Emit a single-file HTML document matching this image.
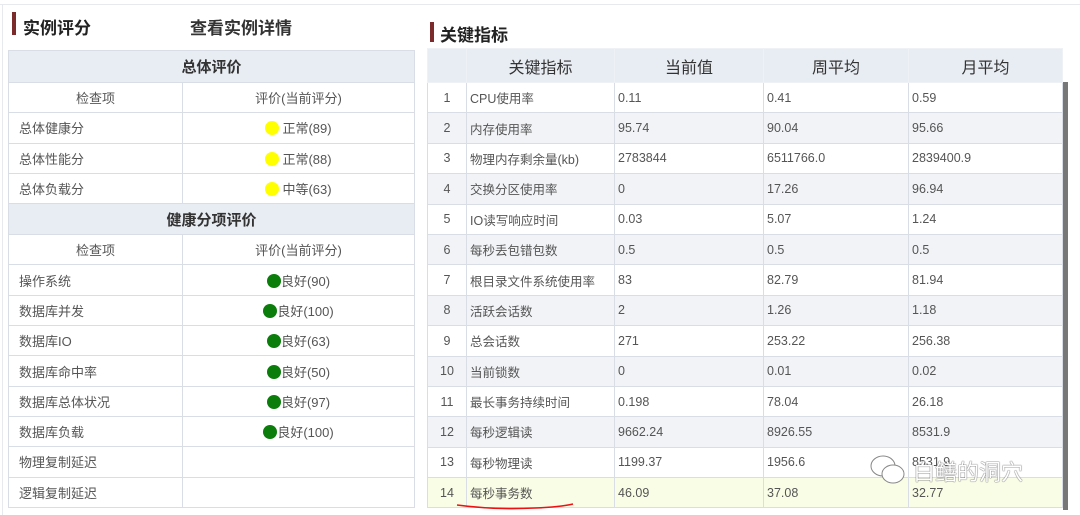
<!DOCTYPE html>
<html><head><meta charset="utf-8"><style>
*{margin:0;padding:0;box-sizing:border-box}
body{width:1080px;height:515px;background:#fff;font-family:"Liberation Sans","Noto Sans CJK SC",sans-serif;color:#333;position:relative;overflow:hidden}
.topline{position:absolute;left:0;top:4px;width:1080px;height:1px;background:#e6e9ee}
.lline{position:absolute;left:2px;top:4px;width:1px;height:511px;background:#e6e9ee}
.title{position:absolute;font-size:17px;font-weight:bold;color:#222}
.bar{position:absolute;width:4px;background:#7b2b2b}
table{border-collapse:collapse;position:absolute;table-layout:fixed}
td{border:1px solid #d9dde5;font-size:13px;color:#555;white-space:nowrap;overflow:hidden}
#L{left:8px;top:50px;width:407px}
#L td{height:30.3px;padding-left:10px}
#L .h{background:#e8edf3;text-align:center;font-weight:bold;font-size:15px;color:#333;padding:0}
#L .c{text-align:center;padding:0}
.dot{display:inline-block;width:14px;height:14px;border-radius:50%;vertical-align:-2px;margin-right:3px}
.y{background:#ffff00}.g{background:#0a7d0a;margin-right:0}
#R{left:427px;top:48px;width:636px}
#R td{height:30.4px;padding-left:3px;font-size:12.5px}
#R tr.hd td{background:#e8edf3;height:34px;text-align:center;font-size:16px;color:#333;padding:0;border-color:#eef1f5}
#R td.n{text-align:center;padding:0}
#R tr:nth-child(odd):not(.hd) td{background:#f1f3f6}
#R tr.hl td{background:#fafde6 !important}
.sb{position:absolute;left:1063px;top:82px;width:5px;height:428px;background:#777}
.wm{position:absolute;left:858px;top:455px;font-size:22px;color:#fff;text-shadow:0 0 1px #555,0 0 1px #555}
</style></head><body>
<div class="topline"></div><div class="lline"></div>
<div class="bar" style="left:12px;top:12px;height:23px"></div>
<div class="title" style="left:23px;top:14px">实例评分</div>
<div class="title" style="left:190px;top:14px;color:#333">查看实例详情</div>
<div class="bar" style="left:430px;top:22px;height:20px"></div>
<div class="title" style="left:440px;top:21px">关键指标</div>
<table id="L"><colgroup><col style="width:174px"><col></colgroup>
<tr><td class="h" colspan="2" style="height:32px">总体评价</td></tr>
<tr><td class="c">检查项</td><td class="c">评价(当前评分)</td></tr>
<tr><td>总体健康分</td><td class="c"><span class="dot y"></span>正常(89)</td></tr>
<tr><td>总体性能分</td><td class="c"><span class="dot y"></span>正常(88)</td></tr>
<tr><td>总体负载分</td><td class="c"><span class="dot y"></span>中等(63)</td></tr>
<tr><td class="h" colspan="2" style="height:31px">健康分项评价</td></tr>
<tr><td class="c">检查项</td><td class="c">评价(当前评分)</td></tr>
<tr><td>操作系统</td><td class="c"><span class="dot g"></span>良好(90)</td></tr>
<tr><td>数据库并发</td><td class="c"><span class="dot g"></span>良好(100)</td></tr>
<tr><td>数据库IO</td><td class="c"><span class="dot g"></span>良好(63)</td></tr>
<tr><td>数据库命中率</td><td class="c"><span class="dot g"></span>良好(50)</td></tr>
<tr><td>数据库总体状况</td><td class="c"><span class="dot g"></span>良好(97)</td></tr>
<tr><td>数据库负载</td><td class="c"><span class="dot g"></span>良好(100)</td></tr>
<tr><td>物理复制延迟</td><td></td></tr>
<tr><td>逻辑复制延迟</td><td></td></tr>
</table>
<table id="R"><colgroup><col style="width:39px"><col style="width:148px"><col style="width:149px"><col style="width:145px"><col></colgroup>
<tr class="hd"><td></td><td>关键指标</td><td>当前值</td><td>周平均</td><td>月平均</td></tr>
<tr><td class="n">1</td><td>CPU使用率</td><td>0.11</td><td>0.41</td><td>0.59</td></tr>
<tr><td class="n">2</td><td>内存使用率</td><td>95.74</td><td>90.04</td><td>95.66</td></tr>
<tr><td class="n">3</td><td>物理内存剩余量(kb)</td><td>2783844</td><td>6511766.0</td><td>2839400.9</td></tr>
<tr><td class="n">4</td><td>交换分区使用率</td><td>0</td><td>17.26</td><td>96.94</td></tr>
<tr><td class="n">5</td><td>IO读写响应时间</td><td>0.03</td><td>5.07</td><td>1.24</td></tr>
<tr><td class="n">6</td><td>每秒丢包错包数</td><td>0.5</td><td>0.5</td><td>0.5</td></tr>
<tr><td class="n">7</td><td>根目录文件系统使用率</td><td>83</td><td>82.79</td><td>81.94</td></tr>
<tr><td class="n">8</td><td>活跃会话数</td><td>2</td><td>1.26</td><td>1.18</td></tr>
<tr><td class="n">9</td><td>总会话数</td><td>271</td><td>253.22</td><td>256.38</td></tr>
<tr><td class="n">10</td><td>当前锁数</td><td>0</td><td>0.01</td><td>0.02</td></tr>
<tr><td class="n">11</td><td>最长事务持续时间</td><td>0.198</td><td>78.04</td><td>26.18</td></tr>
<tr><td class="n">12</td><td>每秒逻辑读</td><td>9662.24</td><td>8926.55</td><td>8531.9</td></tr>
<tr><td class="n">13</td><td>每秒物理读</td><td>1199.37</td><td>1956.6</td><td>8531.9</td></tr>
<tr class="hl"><td class="n">14</td><td>每秒事务数</td><td>46.09</td><td>37.08</td><td>32.77</td></tr>
</table>
<div class="sb"></div>
<svg style="position:absolute;left:455px;top:500px" width="125" height="12"><path d="M2 5 Q40 10 80 8 Q105 7 118 4" stroke="#e11" stroke-width="1.6" fill="none"/></svg>
<svg style="position:absolute;left:868px;top:452px" width="40" height="36"><ellipse cx="15" cy="14" rx="12" ry="10" fill="#fff" stroke="#888"/><ellipse cx="25" cy="22" rx="11" ry="9" fill="#fff" stroke="#888"/></svg>
<div class="wm" style="left:913px">白鳝的洞穴</div>
</body></html>
